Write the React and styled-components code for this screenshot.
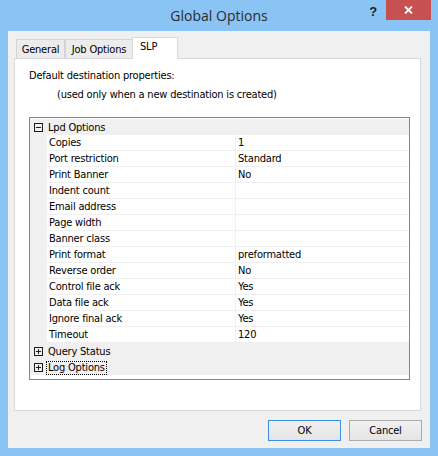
import React from 'react';
import styled, { createGlobalStyle } from 'styled-components';

const GlobalStyle = createGlobalStyle`
  html, body {
    margin: 0;
    padding: 0;
    background: #fff;
  }
`;

const uiFont = `"DejaVu Sans Condensed", "DejaVu Sans", sans-serif`;

const Frame = styled.div`
  width: 438px;
  height: 456px;
  box-sizing: border-box;
  padding: 0 8px 8px;
  background: #8ac4f5;
  display: flex;
  flex-direction: column;
  font-family: ${uiFont};
  font-stretch: condensed;
  font-size: 11px;
  letter-spacing: -0.2px;
  color: #000;
`;

const TitleBar = styled.div`
  height: 31px;
  flex: none;
  display: grid;
  grid-template-columns: 1fr auto 1fr;
  align-items: center;
`;

const Title = styled.div`
  grid-column: 2;
  font-family: "Open Sans", "Noto Sans", sans-serif;
  font-stretch: normal;
  font-size: 14px;
  letter-spacing: 0;
  color: #2b2b2b;
  padding-bottom: 1px;
`;

const Caption = styled.div`
  grid-column: 3;
  justify-self: end;
  align-self: start;
  display: flex;
  margin-right: -1px;
`;

const HelpButton = styled.div`
  width: 26px;
  height: 20px;
  display: flex;
  align-items: center;
  justify-content: center;
  font-family: "Liberation Sans", sans-serif;
  font-weight: bold;
  font-size: 13px;
  color: #1e1e1e;
  padding-top: 3px;
  box-sizing: border-box;
`;

const CloseButton = styled.div`
  width: 45px;
  height: 20px;
  background: #c75050;
  display: flex;
  align-items: center;
  justify-content: center;
`;

const Client = styled.div`
  flex: 1;
  background: #f0f0f0;
  padding: 6px 9px 0 6px;
  display: flex;
  flex-direction: column;
`;

const TabStrip = styled.div`
  height: 21px;
  display: flex;
  align-items: flex-end;
  padding-left: 2px;
`;

const Tab = styled.div`
  width: ${p => p.$width}px;
  height: ${p => (p.$active ? 22 : 19)}px;
  margin-bottom: ${p => (p.$active ? -1 : 0)}px;
  margin-left: ${p => (p.$active ? -1 : 0)}px;
  box-sizing: border-box;
  border: 1px solid ${p => (p.$active ? '#d9d9d9' : '#d4d4d4')};
  border-bottom: none;
  background: ${p => (p.$active ? '#fff' : '#ececec')};
  position: relative;
  z-index: ${p => (p.$active ? 1 : 0)};
  padding: ${p => (p.$active ? '2px 0 0 7px' : '3px 0 0 0')};
  text-align: ${p => (p.$active ? 'left' : 'center')};
  line-height: 14px;
  white-space: nowrap;
`;

const Panel = styled.div`
  height: 353px;
  flex: none;
  box-sizing: border-box;
  border: 1px solid #d9d9d9;
  background: #fff;
  padding: 9px 0 0 14px;
`;

const Label = styled.div`
  line-height: 16px;
  margin-left: ${p => p.$indent || 0}px;
  margin-top: ${p => p.$gap || 0}px;
  white-space: nowrap;
`;

const PropertyGrid = styled.div`
  width: 381px;
  height: 263px;
  margin-top: 14px;
  box-sizing: border-box;
  border: 1px solid #828790;
  padding-top: 1px;
  background: #fff;
`;

const GroupRow = styled.div`
  height: 16px;
  background: #f0f0f0;
  display: flex;
  align-items: center;
  padding: 1px 0 0 4px;
  box-sizing: border-box;
  gap: 5px;
  white-space: nowrap;
`;

const Expander = styled.span`
  width: 9px;
  height: 9px;
  flex: none;
  box-sizing: border-box;
  border: 1px solid #1a1a1a;
  position: relative;
  &::before {
    content: '';
    position: absolute;
    left: 1px;
    right: 1px;
    top: 3px;
    height: 1px;
    background: #1a1a1a;
  }
  &::after {
    content: '';
    display: ${p => (p.$open ? 'none' : 'block')};
    position: absolute;
    top: 1px;
    bottom: 1px;
    left: 3px;
    width: 1px;
    background: #1a1a1a;
  }
`;

const GroupName = styled.span`
  line-height: 12px;
  padding: 0 1px;
  margin-left: -1px;
  outline: ${p => (p.$focused ? '1px dotted #000' : 'none')};
`;

const PropRow = styled.div`
  height: 16px;
  display: grid;
  grid-template-columns: 17px 188px 1fr;
`;

const Gutter = styled.div`
  background: #f0f0f0;
`;

const Cell = styled.div`
  box-sizing: border-box;
  border-bottom: 1px solid #f0f0f0;
  border-left: ${p => (p.$value ? '1px solid #f0f0f0' : 'none')};
  padding: 1px 0 0 2px;
  line-height: 14px;
  white-space: nowrap;
`;

const ButtonRow = styled.div`
  display: flex;
  justify-content: flex-end;
  gap: 8px;
  margin-top: 9px;
  margin-right: -1px;
`;

const Button = styled.button`
  width: 73px;
  height: 21px;
  box-sizing: border-box;
  border: 1px solid ${p => (p.$default ? '#3c8fe0' : '#acacac')};
  background: linear-gradient(#f0f0f0, #e5e5e5);
  font-family: ${uiFont};
  font-stretch: condensed;
  font-size: 11px;
  letter-spacing: -0.2px;
  color: #000;
  padding: 0;
`;

const lpdOptions = [
  ['Copies', '1'],
  ['Port restriction', 'Standard'],
  ['Print Banner', 'No'],
  ['Indent count', ''],
  ['Email address', ''],
  ['Page width', ''],
  ['Banner class', ''],
  ['Print format', 'preformatted'],
  ['Reverse order', 'No'],
  ['Control file ack', 'Yes'],
  ['Data file ack', 'Yes'],
  ['Ignore final ack', 'Yes'],
  ['Timeout', '120'],
];

const tabs = [
  { name: 'General', width: 49 },
  { name: 'Job Options', width: 68 },
  { name: 'SLP', width: 46, active: true },
];

export default function App() {
  return (
    <>
      <GlobalStyle />
      <Frame>
        <TitleBar>
          <Title>Global Options</Title>
          <Caption>
            <HelpButton>?</HelpButton>
            <CloseButton>
              <svg width="9" height="8" viewBox="0 0 9 8">
                <path d="M1 0.5 L8 7.5 M8 0.5 L1 7.5" stroke="#fff" strokeWidth="1.8" />
              </svg>
            </CloseButton>
          </Caption>
        </TitleBar>
        <Client>
          <TabStrip>
            {tabs.map(t => (
              <Tab key={t.name} $width={t.width} $active={t.active}>{t.name}</Tab>
            ))}
          </TabStrip>
          <Panel>
            <Label>Default destination properties:</Label>
            <Label $indent={28} $gap={3}>(used only when a new destination is created)</Label>
            <PropertyGrid>
              <GroupRow>
                <Expander $open />
                <GroupName>Lpd Options</GroupName>
              </GroupRow>
              {lpdOptions.map(([name, value]) => (
                <PropRow key={name}>
                  <Gutter />
                  <Cell>{name}</Cell>
                  <Cell $value>{value}</Cell>
                </PropRow>
              ))}
              <GroupRow>
                <Expander />
                <GroupName>Query Status</GroupName>
              </GroupRow>
              <GroupRow>
                <Expander />
                <GroupName $focused>Log Options</GroupName>
              </GroupRow>
            </PropertyGrid>
          </Panel>
          <ButtonRow>
            <Button $default>OK</Button>
            <Button>Cancel</Button>
          </ButtonRow>
        </Client>
      </Frame>
    </>
  );
}
